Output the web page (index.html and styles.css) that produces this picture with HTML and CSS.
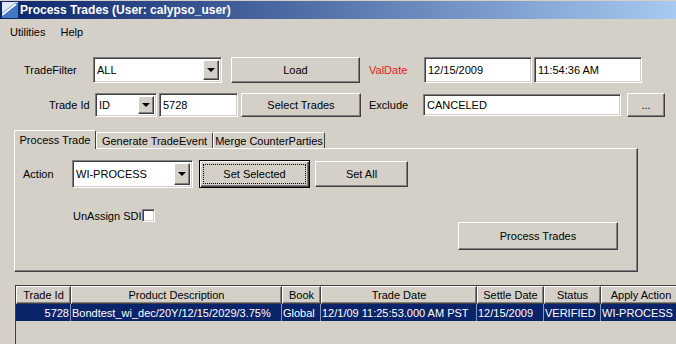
FILE: index.html
```html
<!DOCTYPE html>
<html lang="en">
<head>
  <meta charset="UTF-8" />
  <title>Process Trades</title>
  <link rel="stylesheet" href="styles.css">
</head>
<body>
  <div class="window">
    <div class="titlebar">
      <svg class="app-icon" width="16" height="16" viewBox="0 0 16 16">
        <rect x="0" y="0" width="16" height="16" fill="#dfe9f7"/>
        <path d="M0 16 L0 11 L13 1 L16 1 L16 16 Z" fill="#3f78c4"/>
        <path d="M0 13 L14 2" stroke="#fff" stroke-width="2"/>
      </svg>
      <span>Process Trades (User: calypso_user)</span>
    </div>

    <div class="menubar">
      <span class="menu-item">Utilities</span>
      <span class="menu-item">Help</span>
    </div>

    <!-- top filter rows -->
    <div class="row row-filter">
      <span class="lbl lbl-filter">TradeFilter</span>
      <div class="combo sunken w-filter"><span class="val">ALL</span><span class="arrow raised"></span></div>
      <button class="btn raised w-load">Load</button>
      <span class="lbl lbl-red">ValDate</span>
      <div class="field sunken w-date">12/15/2009</div>
      <div class="field sunken w-time">11:54:36 AM</div>
    </div>

    <div class="row row-id">
      <span class="lbl lbl-id">Trade Id</span>
      <div class="combo sunken w-id"><span class="val">ID</span><span class="arrow raised"></span></div>
      <div class="field sunken w-num">5728</div>
      <button class="btn raised w-select">Select Trades</button>
      <span class="lbl lbl-exclude">Exclude</span>
      <div class="field sunken w-exclude">CANCELED</div>
      <button class="btn raised w-dots">...</button>
    </div>

    <!-- tabs -->
    <div class="tabs">
      <div class="tab-strip">
        <span class="tab active">Process Trade</span>
        <span class="tab tab-gen">Generate TradeEvent</span>
        <span class="tab tab-merge">Merge CounterParties</span>
      </div>
      <div class="panel">
        <div class="action-row">
          <span class="lbl lbl-action">Action</span>
          <div class="combo sunken w-action"><span class="val">WI-PROCESS</span><span class="arrow raised"></span></div>
          <button class="btn btn-default w-setsel"><span class="focus">Set Selected</span></button>
          <button class="btn raised w-setall">Set All</button>
        </div>
        <div class="sdi-row">
          <span>UnAssign SDI</span><span class="check sunken"></span>
        </div>
        <div class="process-row">
          <button class="btn raised w-process">Process Trades</button>
        </div>
      </div>
    </div>

    <!-- results table -->
    <div class="grid-wrap">
      <div class="grid">
        <div class="th">Trade Id</div>
        <div class="th">Product Description</div>
        <div class="th">Book</div>
        <div class="th">Trade Date</div>
        <div class="th">Settle Date</div>
        <div class="th">Status</div>
        <div class="th">Apply Action</div>

        <div class="td sel num">5728</div>
        <div class="td sel">Bondtest_wi_dec/20Y/12/15/2029/3.75%</div>
        <div class="td sel">Global</div>
        <div class="td sel">12/1/09 11:25:53.000 AM PST</div>
        <div class="td sel">12/15/2009</div>
        <div class="td sel">VERIFIED</div>
        <div class="td sel">WI-PROCESS</div>
      </div>
    </div>
  </div>
</body>
</html>
```

FILE: styles.css
```css
* {
  box-sizing: border-box;
}
body {
  margin: 0;
  background: #d4d0c8;
  font-family: "Liberation Sans", Arial, sans-serif;
  font-size: 11px;
  color: #000;
}
.window {
  width: 676px;
  height: 344px;
  overflow: hidden;
  padding-top: 1px;
}

/* title + menu */
.titlebar {
  height: 18px;
  display: flex;
  align-items: center;
  gap: 2px;
  padding-left: 2px;
  background: linear-gradient(to right, #0a246a, #a6caf0);
  color: #fff;
  font-weight: bold;
  font-size: 12px;
}
.app-icon {
  display: block;
}
.menubar {
  height: 26px;
  display: flex;
  align-items: center;
  padding-left: 10px;
  gap: 15px;
  font-size: 11px;
}

/* 3d borders */
.sunken {
  background: #fff;
  border: 1px solid;
  border-color: #808080 #fff #fff #808080;
  box-shadow: inset 1px 1px #404040, inset -1px -1px #d4d0c8;
}
.raised {
  background: #d4d0c8;
  border: 1px solid;
  border-color: #fff #404040 #404040 #fff;
  box-shadow: inset -1px -1px #808080;
}

/* rows */
.row {
  display: flex;
  align-items: center;
}
.row-filter {
  margin-top: 12px;
  height: 26px;
  padding-left: 24px;
}
.row-id {
  margin-top: 10px;
  height: 24px;
  padding-left: 49px;
}
.lbl-filter { width: 69px; }
.lbl-id { width: 46px; }
.lbl-red {
  color: #e31b1b;
  margin-left: 9px;
  width: 55px;
}
.lbl-exclude {
  margin-left: 8px;
  width: 54px;
}

.field, .combo {
  height: 100%;
  display: flex;
  align-items: center;
  padding-left: 3px;
}
.combo {
  justify-content: space-between;
  padding: 2px 2px 2px 3px;
}
.combo .arrow {
  width: 16px;
  height: 100%;
  display: flex;
  align-items: center;
  justify-content: center;
}
.combo .arrow::after {
  content: "";
  border-left: 4px solid transparent;
  border-right: 4px solid transparent;
  border-top: 4px solid #000;
}
.btn {
  font: inherit;
  color: #000;
  height: 100%;
  padding: 0;
}

.w-filter { width: 129px; }
.w-load { width: 129px; margin-left: 9px; }
.w-date { width: 108px; }
.w-time { width: 108px; margin-left: 2px; }
.w-id { width: 62px; }
.w-num { width: 79px; margin-left: 2px; }
.w-select { width: 120px; margin-left: 3px; }
.w-exclude { width: 198px; height: 22px; }
.w-dots { width: 38px; margin-left: 6px; }

/* tabs */
.tabs {
  margin: 13px 0 0 14px;
  width: 624px;
}
.tab-strip {
  display: flex;
  align-items: flex-end;
  height: 18px;
}
.tab {
  height: 16px;
  display: flex;
  align-items: center;
  justify-content: center;
  border: 1px solid;
  border-color: #fff #404040 transparent #fff;
  border-bottom: none;
  border-radius: 2px 2px 0 0;
}
.tab.active {
  width: 82px;
  height: 19px;
  margin-bottom: -1px;
  background: #d4d0c8;
  position: relative;
  z-index: 1;
}
.tab-gen { width: 117px; }
.tab-merge { width: 112px; }
.panel {
  height: 124px;
  border: 1px solid;
  border-color: #fff #404040 #404040 #fff;
  box-shadow: inset -1px -1px #808080;
  padding: 11px 0 0 8px;
}
.action-row {
  display: flex;
  align-items: center;
  height: 28px;
}
.lbl-action { width: 49px; }
.w-action { width: 121px; }
.btn-default {
  width: 111px;
  margin-left: 6px;
  background: #d4d0c8;
  border: 1px solid #000;
  box-shadow: inset 1px 1px #fff, inset -1px -1px #404040, inset -2px -2px #808080;
  padding: 3px;
}
.btn-default .focus {
  display: flex;
  align-items: center;
  justify-content: center;
  height: 100%;
  border: 1px dotted #000;
}
.w-setall {
  width: 93px;
  height: 26px;
  margin-left: 5px;
}
.sdi-row {
  margin-top: 21px;
  height: 13px;
  padding-left: 50px;
  display: flex;
  align-items: center;
}
.check {
  width: 13px;
  height: 13px;
  margin-left: 1px;
}
.process-row {
  display: flex;
  justify-content: flex-end;
  padding-right: 19px;
}
.w-process {
  width: 160px;
  height: 28px;
}

/* table */
.grid-wrap {
  margin: 13px 0 0 15px;
  height: 70px;
  border: 1px solid;
  border-color: #404040 transparent transparent #404040;
  border-right: none;
}
.grid {
  display: grid;
  grid-template-columns: 55px 211px 39px 156px 67px 57px 80px;
  grid-template-rows: 18px 17px;
}
.th {
  background: #d4d0c8;
  border: 1px solid;
  border-color: #fff #404040 #404040 #fff;
  box-shadow: inset -1px -1px #808080;
  display: flex;
  align-items: center;
  justify-content: center;
  white-space: nowrap;
}
.td {
  display: flex;
  align-items: center;
  padding-left: 1px;
  white-space: nowrap;
  overflow: hidden;
}
.td.sel {
  background: #0a246a;
  color: #fff;
  border-right: 1px solid #8a96b8;
}
.td.num {
  justify-content: flex-end;
  padding-right: 1px;
}
```
